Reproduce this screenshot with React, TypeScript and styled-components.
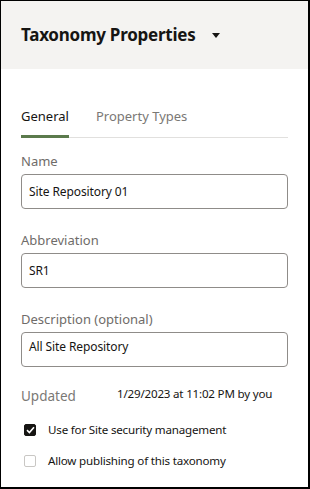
import React from "react";
import styled, { createGlobalStyle } from "styled-components";

const Global = createGlobalStyle`
  html, body { margin: 0; padding: 0; background: #fff; }
  * { box-sizing: border-box; }
  body { font-family: "Noto Sans", "Open Sans", Arial, sans-serif; color: #161513; }
`;

const Frame = styled.div`
  width: 310px;
  height: 489px;
  border-style: solid;
  border-color: #000;
  border-width: 1px 2px 2px 1px;
  background: #fff;
  display: flex;
  flex-direction: column;
  overflow: hidden;
`;

const Header = styled.div`
  height: 68px;
  background: #f4f3f1;
  display: flex;
  align-items: center;
  padding-left: 20px;
  gap: 17px;
`;

const Title = styled.h1`
  margin: 0;
  font-size: 17px;
  font-weight: 700;
  line-height: 22px;
  color: #161513;
  letter-spacing: -0.25px;
`;

const Caret = styled.span`
  width: 0;
  height: 0;
  border-left: 4.5px solid transparent;
  border-right: 4.5px solid transparent;
  border-top: 5px solid #161513;
  margin-top: 1px;
`;

const Body = styled.div`
  padding: 37px 20px 0 20px;
  display: flex;
  flex-direction: column;
`;

const TabBar = styled.div`
  display: flex;
  gap: 27px;
  border-bottom: 1px solid #e1e0de;
`;

const Tab = styled.div<{ $active?: boolean }>`
  font-size: 13px;
  line-height: 20px;
  padding-bottom: 12px;
  margin-bottom: -1px;
  color: ${(p) => (p.$active ? "#161513" : "#7a7875")};
  box-shadow: ${(p) => (p.$active ? "inset 0 -3px 0 #5b7a4c" : "none")};
`;

const Fields = styled.div`
  margin-top: 14px;
  display: flex;
  flex-direction: column;
  gap: 22px;
`;

const Field = styled.div`
  display: flex;
  flex-direction: column;
  gap: 4px;
`;

const Label = styled.label`
  font-size: 13px;
  line-height: 18px;
  color: #6f6c69;
`;

const Input = styled.div<{ $multiline?: boolean }>`
  height: 35px;
  border: 1px solid #8f8c89;
  border-radius: 4px;
  padding: ${(p) => (p.$multiline ? "5px 7px" : "0 7px")};
  display: flex;
  align-items: ${(p) => (p.$multiline ? "flex-start" : "center")};
  font-size: 12px;
  letter-spacing: -0.1px;
  color: #161513;
`;

const MetaRow = styled.div`
  margin-top: 19px;
  display: flex;
  align-items: flex-start;
`;

const MetaLabel = styled.span`
  width: 96px;
  font-size: 13.5px;
  line-height: 20px;
  color: #7a7875;
`;

const MetaValue = styled.span`
  font-size: 11.6px;
  letter-spacing: -0.2px;
  line-height: 16px;
  white-space: nowrap;
  color: #161513;
`;

const Checks = styled.div`
  margin-top: 14px;
  display: flex;
  flex-direction: column;
  gap: 11px;
`;

const CheckRow = styled.div`
  display: flex;
  align-items: center;
  height: 20px;
  gap: 12px;
  padding-left: 3px;
`;

const Box = styled.span<{ $checked?: boolean }>`
  width: 12px;
  height: 12px;
  border-radius: 2px;
  background: ${(p) => (p.$checked ? "#161513" : "#fff")};
  border: 1px solid ${(p) => (p.$checked ? "#161513" : "#c9c7c4")};
  display: flex;
  align-items: center;
  justify-content: center;
`;

const CheckLabel = styled.span`
  font-size: 11.6px;
  letter-spacing: -0.2px;
  line-height: 16px;
  white-space: nowrap;
  color: #161513;
`;

export default function App() {
  return (
    <>
      <Global />
      <Frame>
        <Header>
          <Title>Taxonomy Properties</Title>
          <Caret />
        </Header>
        <Body>
          <TabBar>
            <Tab $active>General</Tab>
            <Tab>Property Types</Tab>
          </TabBar>
          <Fields>
            <Field>
              <Label>Name</Label>
              <Input>Site Repository 01</Input>
            </Field>
            <Field>
              <Label>Abbreviation</Label>
              <Input>SR1</Input>
            </Field>
            <Field>
              <Label>Description (optional)</Label>
              <Input $multiline>All Site Repository</Input>
            </Field>
          </Fields>
          <MetaRow>
            <MetaLabel>Updated</MetaLabel>
            <MetaValue>1/29/2023 at 11:02 PM by you</MetaValue>
          </MetaRow>
          <Checks>
            <CheckRow>
              <Box $checked>
                <svg width="9" height="8" viewBox="0 0 9 8">
                  <path d="M1 4.2 L3.4 6.5 L8 1.3" stroke="#fff" strokeWidth="1.6" fill="none" />
                </svg>
              </Box>
              <CheckLabel>Use for Site security management</CheckLabel>
            </CheckRow>
            <CheckRow>
              <Box />
              <CheckLabel>Allow publishing of this taxonomy</CheckLabel>
            </CheckRow>
          </Checks>
        </Body>
      </Frame>
    </>
  );
}
